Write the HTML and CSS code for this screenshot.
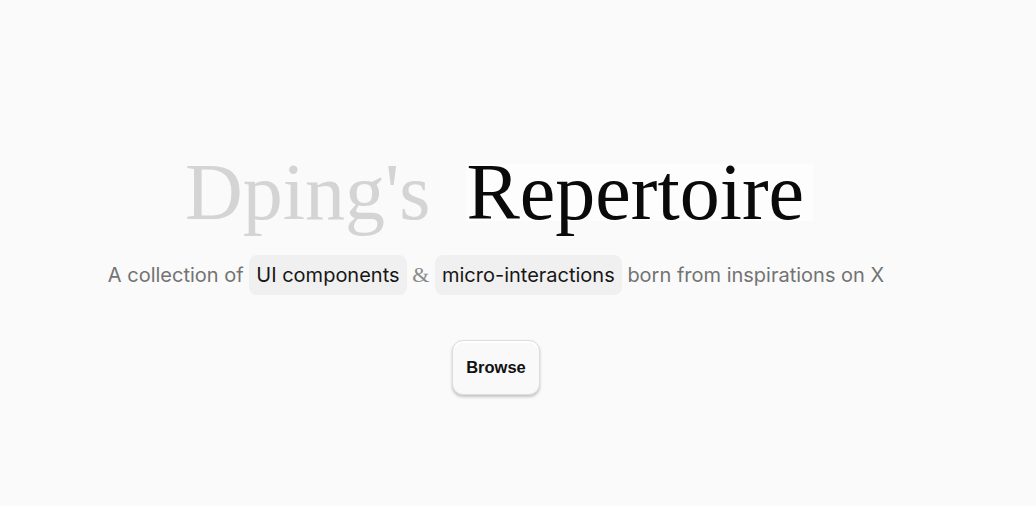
FILE: index.html
```html
<!DOCTYPE html>
<html lang="en">
<head>
<meta charset="utf-8">
<title>Dping's Repertoire</title>
<link rel="stylesheet" href="styles.css">
</head>
<body>
<main class="hero">
  <h1 class="title"><span class="title-muted">Dping's</span> <span class="title-main">Repertoire</span></h1>
  <p class="subtitle">A collection of <span class="chip">UI components</span> <span class="amp">&amp;</span> <span class="chip">micro-interactions</span> born from inspirations on X</p>
  <button class="browse" type="button">Browse</button>
</main>
</body>
</html>
```

FILE: styles.css
```css
html, body {
  margin: 0;
  padding: 0;
  background: #fafafa;
}
body {
  width: 1036px;
  height: 506px;
  overflow: hidden;
}
.hero {
  display: flex;
  flex-direction: column;
  align-items: center;
  padding-top: 146px;
  padding-right: 44px;
}
.title {
  margin: 0 0 0 6px;
  font-family: "Liberation Serif", "Times New Roman", serif;
  font-weight: 400;
  font-size: 80px;
  line-height: 92px;
  color: #0a0a0a;
  white-space: nowrap;
}
.title-muted {
  color: #d4d4d4;
}
.title-main {
  background: #fdfdfd;
  padding: 0 9px 0 0;
  margin-left: 16px;
  display: inline-block;
  line-height: 57px;
}
.subtitle {
  margin: 17px 0 0;
  font-family: Inter, "Liberation Sans", sans-serif;
  font-size: 20px;
  line-height: 40px;
  color: #737373;
  white-space: nowrap;
}
.chip {
  display: inline-block;
  background: #f0f0f0;
  color: #171717;
  border-radius: 8px;
  padding: 0 7px;
  line-height: 40px;
}
.amp {
  font-family: "Liberation Serif", "Times New Roman", serif;
  color: #8a8a8a;
  font-size: 22px;
}
.browse {
  margin-top: 45px;
  font-family: "Liberation Sans", Arial, sans-serif;
  font-weight: 700;
  font-size: 16.5px;
  color: #111111;
  background: #f9f9f9;
  border: 1px solid #dedede;
  border-radius: 11px;
  width: 88px;
  height: 55px;
  padding: 0;
  box-shadow: inset 0 2px 0 #ffffff, 0 2px 3px rgba(0, 0, 0, 0.22);
}
```
